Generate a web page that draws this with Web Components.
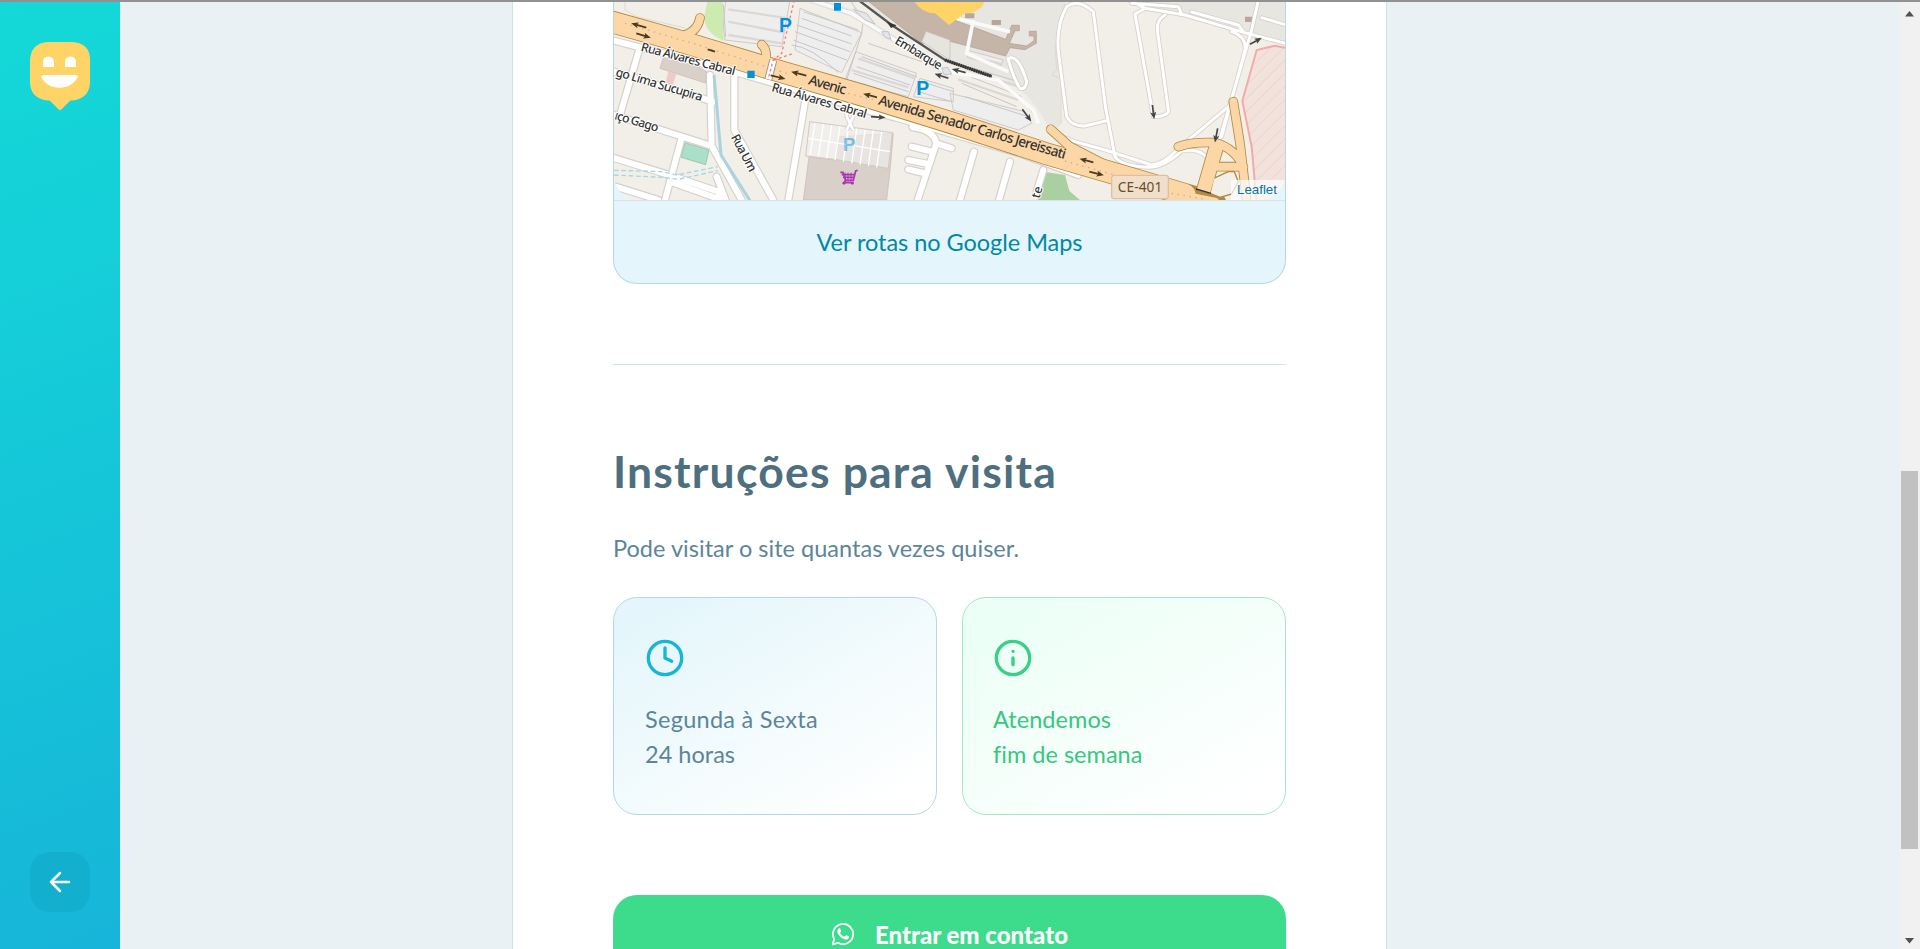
<!DOCTYPE html>
<html lang="pt-BR">
<head>
<meta charset="utf-8">
<title>Instruções para visita</title>
<style>
html,body{margin:0;height:100%;overflow:hidden}
body{font-family:Lato,"Noto Sans",sans-serif;font-size:23.5px;background:#e9f1f5}
</style>
</head>
<body>
<visit-page></visit-page>
<script>
const define=(name,html,setup)=>customElements.define(name,class extends HTMLElement{
  connectedCallback(){
    if(this.shadowRoot)return;
    const t=document.createElement('template');
    t.innerHTML=html;
    this.attachShadow({mode:'open'}).append(t.content.cloneNode(true));
    if(setup)setup(this);
  }
});

/* One line of text tracked to a given advance width. */
define('fit-text',`<style>:host{display:block;white-space:nowrap}span{display:inline-block}</style><span><slot></slot></span>`,el=>{
  const s=el.shadowRoot.querySelector('span');
  const n=el.textContent.length;
  const w=s.getBoundingClientRect().width;
  s.style.letterSpacing=((+el.getAttribute('width')-w)/n).toFixed(3)+'px';
});

define('side-bar',`<style>
:host{display:flex;flex-direction:column;justify-content:space-between;align-items:center;box-sizing:border-box;width:120px;height:100%;padding:40px 0 37px;background:linear-gradient(160deg,#14d9d8 0%,#17b5d9 100%)}
svg{display:block}
.back{display:grid;place-items:center;width:60px;height:60px;border-radius:20px;background:#12afce}
</style>
<svg width="60" height="68" viewBox="0 0 60 68"><path fill="#ffd466" d="M18 0H42Q60 1 60 18V41Q59 57 42 58.5H40.500L31.500 67.300Q30 68.500 28.500 67.300L19.500 58.500H18Q1 57 0 41V18Q1 1 18 0Z"/><path fill="#fff" d="M13 25V20a5.500 5.500 0 0 1 11 0v5zM35 25V20a5.500 5.500 0 0 1 11 0v5zM13.200 33H45.800Q48.500 33 47.500 35.500C44 42 37.500 45.700 29.500 45.700S15 42 11.400 35.500Q10.500 33 13.200 33Z"/></svg>
<div class="back"><svg width="24" height="24" viewBox="0 0 24 24" fill="none" stroke="#fff" stroke-width="2.500" stroke-linecap="round" stroke-linejoin="round"><path d="M21 12H3M12 3L3 12L12 21"/></svg></div>`);

define('scroll-bar',`<style>
:host{display:flex;flex-direction:column;box-sizing:border-box;width:20px;height:100%;padding:9px 2px 5px 1px;background:#f1f1f1}
svg{display:block;margin:0 auto}
.track{flex:1;padding-top:454px}.thumb{height:378px;background:#c1c1c1}
</style>
<svg width="9" height="6"><path d="M0 5.500L4.500 0L9 5.500z" fill="#505050"/></svg><div class="track"><div class="thumb"></div></div><svg width="9" height="6"><path d="M0 0L4.500 5.500L9 0z" fill="#505050"/></svg>`);

define('street-map',`<style>
:host{display:block;height:200px;overflow:hidden;border-radius:0 0 24px 24px;position:relative;background:#f2efe9}
svg{display:block}
text{font-family:"Noto Sans",sans-serif;fill:#333}
.halo{paint-order:stroke;stroke:#fff;stroke-width:6px;stroke-linejoin:round}
.c{fill:none;stroke:#d5d1cc;stroke-linecap:round;stroke-linejoin:round}
.w{fill:none;stroke:#fff;stroke-linecap:round;stroke-linejoin:round}
.oc{fill:none;stroke:#b08a42;stroke-linejoin:round;stroke-linecap:round}
.o{fill:none;stroke:#fcd6a4;stroke-linejoin:round;stroke-linecap:round}
.p{font-family:"Liberation Sans",sans-serif;font-weight:bold;fill:#0092da}
.leaf{position:absolute;right:0;bottom:0;box-sizing:border-box;width:54px;height:20px;padding:0 6px;background:rgba(255,255,255,.7);font:13.300px/19px "Liberation Sans",Arial,sans-serif;color:#0078a8}
</style>
<svg width="671" height="200" viewBox="27 0 2013 600" preserveAspectRatio="none">
<defs>
<pattern id="h" width="28" height="28" patternUnits="userSpaceOnUse" patternTransform="rotate(45)"><rect width="28" height="28" fill="#f1e2dc"/><path d="M0 0V28" stroke="#eec6c2" stroke-width="3"/></pattern>
<marker id="a" markerUnits="userSpaceOnUse" markerWidth="22" markerHeight="20" refX="10" refY="10" orient="auto"><path d="M0 1L22 10L0 19L5 10z" fill="#4a3a20"/></marker>
<marker id="g" markerUnits="userSpaceOnUse" markerWidth="22" markerHeight="20" refX="10" refY="10" orient="auto"><path d="M0 1L22 10L0 19L5 10z" fill="#444"/></marker>
<g id="roads">
<path d="M27 122L390 216L800 335L870 352L960 378L1250 462L1420 525"/>
<path d="M102 150L45 345M27 215L325 305M27 345L320 438L410 600M315 225L320 438M388 225V390L505 600M228 420L180 600M27 474L196 526L340 575L350 600M196 545L350 600M335 530L362 600M27 558L160 600"/>
<path d="M600 305L550 600M922 382Q985 390 994 430L938 600M994 430L1040 445M920 440L985 456M910 480L970 492M910 508L960 520M1107 455L1065 600M1215 485L1182 600M1315 510L1295 575"/>
</g>
<g id="fine">
<path d="M1385 20Q1420 -5 1465 35L1502 325L1530 470Q1550 500 1635 502Q1680 500 1730 453Q1800 440 1820 500M1385 20Q1350 80 1362 170L1385 350Q1400 380 1440 378L1505 362M1345 400L1410 425L1500 450L1640 495Q1680 490 1715 450L1870 320"/>
<path d="M1575 0L1620 25L1740 45L1908 95L2041 130M1620 25L1590 42L1645 350M1680 45Q1655 60 1657 90L1690 330Q1690 350 1645 350M1580 10L1720 20L1730 42M1760 36L1900 75L1915 95M1960 0L1940 90L1835 450M1880 95Q1925 110 1920 150L1850 410M1970 53L2041 74M1209 176Q1240 160 1265 245Q1262 270 1245 265Q1225 235 1209 176Z"/>
</g>
</defs>
<rect width="2060" height="600" fill="#f2efe9"/>
<path fill="#e7e6e0" d="M760 0H1385Q1355 80 1360 170L1370 370L1340 400Q1270 260 1180 230L1050 195Z"/><path fill="#e7e6e0" d="M1540 0H2041V130L1908 95L1620 25Z"/>
<path fill="none" stroke="#e2dac8" stroke-width="3" d="M1380 10L1350 140L1355 210L1340 225L1368 235V370M60 6V30L95 50L240 84M1180 240Q1260 290 1300 370"/>
<path fill="#cdebb0" d="M308 0H354L356 122Q300 100 298 50Z"/>
<path fill="#aacfa0" d="M1320 516L1380 525L1393 573L1425 600H1298Z"/>
<path fill="#aadfcb" stroke="#83ba9c" stroke-width="2" d="M240 428L312 450L302 494L228 472Z"/>
<path fill="#d9d0c9" stroke="#c4b5ab" stroke-width="2" d="M182 150L305 215L301 249L165 205Z"/>
<path fill="#eecbc8" d="M190 213L214 222L202 258L182 250Z"/>
<path fill="#d9d0c9" stroke="#c9b8af" stroke-width="2" d="M700 410L865 400L855 512L845 600H595L612 470L690 480Z"/>
<path fill="#c5b5a9" stroke="#b39c8c" stroke-width="2" d="M785 0H1035V55L1202 118L1220 76H1243V92H1230L1213 130L1265 138L1287 122V108H1273V94H1294V130L1260 149L1215 143L1202 168L1035 124L950 130Z"/>
<path fill="#e6e4df" stroke="#c5bab2" stroke-width="2" d="M963 94L1035 120V180L950 125Z"/>
<path fill="#b9a69b" d="M1080 40H1108V55H1080zM1160 60H1188V75H1160zM1920 50H1942V66H1920z"/>
<g fill="#eee" stroke="#d4c8c5" stroke-width="3">
<path d="M362 0H555L530 140L360 120L355 78ZM585 25L770 98L710 218L570 150ZM752 155L935 220L910 290L720 240ZM945 235L1045 265V305L925 290ZM1035 280L1260 335L1280 370L1240 390L1045 330ZM1085 150L1195 180L1187 198L1088 173Z"/>
<path d="M614 365L862 398L850 505L688 478L602 468Z" fill-opacity=".65"/></g>
<g fill="none" stroke="#ddd7d3" stroke-width="7"><path d="M370 28L550 55M370 65L540 98M370 105L530 130M760 175L930 235M740 210L910 262M1090 170L1190 192M1080 205L1240 260M1060 238L1240 300"/></g>
<g fill="none" stroke="#c6c6c6" stroke-width="3"><path d="M595 35L760 90M590 55L740 108M575 75L740 132M570 95L735 155M565 120L725 180M560 135Q620 140 700 218M790 130L950 185M770 170L935 230M755 200L915 255M745 220L910 275M950 245L1045 275M940 275L1040 305M1090 200L1240 245M1070 220L1250 290M1070 250L1235 320M1080 290L1270 350M735 0L775 60L770 100L725 240M355 15L362 110"/></g>
<g fill="none" stroke="#ddd"><path d="M618 0L740 40L870 120L1035 225" stroke-width="18"/></g>
<g fill="none" stroke="#fafafa" stroke-width="11"><path d="M618 0L740 40L870 120L1035 225M1035 215L1180 240L1285 330L1300 370M1105 60L1085 160L1210 215M1035 50L1215 95"/></g>
<g fill="none" stroke="#fff" stroke-width="4"><path d="M630 370L615 465M655 372L640 470M680 375L665 475M705 378L690 480M730 382L715 485M755 386L740 490M780 390L765 494M805 392L790 498M830 396L815 502M610 415L855 455"/></g>
<g fill="#e5e4e7" stroke="#c3c4cb" stroke-width="3"><path d="M745 28L785 40L810 72L780 60ZM830 95L850 95L858 118L840 112ZM1010 205L1028 202L1040 222L1018 224Z"/></g>
<path fill="url(#h)" stroke="#f6aaa8" stroke-width="6" d="M2050 145L2010 137L1955 150L1912 303L1940 440L1955 610H2060Z"/>
<path fill="none" stroke="#d5d1cc" stroke-width="13" d="M725 320V350L745 390M745 350L725 390"/><path fill="none" stroke="#fff" stroke-width="8" d="M725 320V350L745 390M745 350L725 390"/>
<use href="#roads" class="c" stroke-width="25"/><use href="#fine" class="c" stroke-width="14"/>
<use href="#roads" class="w" stroke-width="18"/><use href="#fine" class="w" stroke-width="9"/>
<path fill="none" stroke="#aad3df" stroke-width="9" d="M327 225L348 465L435 602"/>
<path fill="none" stroke="#a8d5e2" stroke-width="4" stroke-dasharray="14 8" d="M27 511L170 515L215 525L338 500M27 525L170 532L220 538L338 512"/>
<g class="oc"><path stroke-width="68" d="M0 60L230 125L500 207L780 288L1035 367L1320 460L1560 530L1830 610"/><path stroke-width="29" d="M285 54Q275 105 215 110M470 134Q490 150 480 190M1337 388L1395 440L1540 515M1885 305L1905 430L1925 600M1720 440Q1760 425 1830 428Q1890 445 1915 500M1820 500H1910"/><path stroke-width="46" stroke-linecap="butt" d="M1837 430L1795 575"/></g>
<path d="M1870 515H1888L1900 545L1880 582L1845 592L1815 580L1826 535Z" fill="#f2efe9" stroke="#b08a42" stroke-width="4" stroke-linejoin="round"/>
<g class="o"><path stroke-width="63" d="M0 60L230 125L500 207L780 288L1035 367L1320 460L1560 530L1740 583"/><path stroke-width="24" d="M285 54Q275 105 215 110M470 134Q490 150 480 190M1337 388L1395 440L1540 515M1885 305L1905 430L1925 600M1720 440Q1760 425 1830 428Q1890 445 1915 500M1820 500H1910"/><path stroke-width="41" stroke-linecap="butt" d="M1837 430L1795 575"/><path stroke-width="24" d="M1740 587L1830 605"/></g>
<path d="M1773 567L1818 580" stroke="#333" stroke-width="4"/>
<path d="M60 70L280 135L545 220M730 280L810 300M1380 483L1530 525M1700 580L1800 598" fill="none" stroke="#c8a9a5" stroke-width="4" stroke-dasharray="4 14"/>
<path d="M505 180L490 238" stroke="#999" stroke-width="24"/><path d="M505 180L490 238" stroke="#fff" stroke-width="18"/><path d="M568 0L530 160L504 182L490 235M560 162L508 180" fill="none" stroke="#ff7a70" stroke-width="4" stroke-dasharray="8 8"/>
<path d="M760 0L860 75L1020 180L1160 229" fill="none" stroke="#555" stroke-width="7"/><path d="M1020 180L1160 229" fill="none" stroke="#333" stroke-width="10" stroke-dasharray="5 2"/><path d="M845 65L875 76L858 84z" fill="#333"/>
<path fill="#ffd466" d="M925 0H1140Q1130 38 1080 40L1032 75L990 40Q950 40 925 0Z"/>
<g fill="#0092da"><path d="M687 9H708V32H687zM427 212H449V234H427z"/></g>
<text class="p" x="522" y="97" font-size="58">P</text><text class="p" x="934" y="284" font-size="58">P</text><text class="p" x="714" y="453" font-size="56" opacity=".5">P</text>
<g fill="none" stroke="#4a3a20" stroke-width="5" marker-end="url(#a)"><path d="M124 83L90 73"/><path d="M94 100L126 110"/><path d="M604 227L570 218"/><path d="M497 226L530 234"/><path d="M816 292L786 284"/><path d="M1465 487L1435 479"/><path d="M1453 515L1485 523"/></g><path d="M308 148L330 155" stroke="#4a3a20" stroke-width="5"/>
<g fill="none" stroke="#444" stroke-width="5" marker-end="url(#g)"><path d="M798 350L830 352"/><path d="M1030 235L1000 225"/><path d="M1082 218L1052 210"/><path d="M1252 328L1272 355"/><path d="M1642 315L1646 346"/><path d="M1838 385L1832 416"/><path d="M1935 133L1960 119"/></g>
<g class="halo" font-size="37" font-weight="500">
<text transform="translate(106 152) rotate(14.800)" textLength="291">Rua Álvares Cabral</text>
<text transform="translate(498 273) rotate(16)" textLength="295">Rua Álvares Cabral</text>
<text transform="translate(30 227) rotate(16.500)" textLength="270">go Lima Sucupira</text>
<text transform="translate(27 357) rotate(16.500)" textLength="135">ıço Gago</text>
<text transform="translate(377 411) rotate(62)" textLength="122">Rua Um</text>
<text transform="translate(867 129) rotate(31)" textLength="158">Embarque</text>
<text transform="translate(1303 597) rotate(-74)">te</text></g>
<g font-size="42" font-weight="500" style="paint-order:stroke;stroke:#fcd6a4;stroke-width:5px"><text transform="translate(608 252) rotate(16)" textLength="116">Avenic</text><text transform="translate(818 313) rotate(16.300)" textLength="584">Avenida Senador Carlos Jereissati</text></g>
<rect x="1520" y="526" width="170" height="70" rx="7" fill="#f0e0cb" stroke="#dec0a0" stroke-width="4"/><text x="1538" y="575" font-size="41" textLength="134" style="fill:#684d2b">CE-401</text>
<path d="M706 517H714L722 541H745L752 513L758 511M710 524H750M714 532H747M722 541L716 548H746" fill="none" stroke="#ad36b0" stroke-width="5"/><path d="M720 518V541M729 518V541M738 518V541" stroke="#ad36b0" stroke-width="3"/><circle cx="717" cy="550" r="4" fill="#ad36b0"/><circle cx="742" cy="550" r="4" fill="#ad36b0"/>
</svg><div class="leaf">Leaflet</div>`);

define('map-card',`<style>
:host{display:block;box-sizing:border-box;height:284px;border:1px solid #b3dae2;border-top:0;border-radius:0 0 24px 24px;background:#e4f6fb;overflow:hidden}
.line{height:1px;background:#d9e2ea}
.link{display:flex;justify-content:center;line-height:82px;height:82px;color:#0089a5}
</style><street-map></street-map><div class="line"></div><div class="link"><fit-text width="266">Ver rotas no Google Maps</fit-text></div>`);

define('info-card',`<style>
:host{display:block;box-sizing:border-box;height:218px;padding:40px 31px;border:1px solid #b3dae2;border-radius:24px;background:linear-gradient(149.970deg,#e4f6fb 8.800%,#fff 91.200%);color:#5c8599;line-height:35px}
:host([tone=green]){padding-left:30px;border-color:#a1e9c5;background:linear-gradient(149.970deg,#ebfff6 8.800%,#fff 91.200%);color:#37c77f}
.text{margin-top:24px}
</style><slot name="icon"></slot><div class="text"><slot></slot></div>`);

define('contact-button',`<style>
:host{display:flex;justify-content:center;align-items:center;gap:20px;box-sizing:border-box;height:78px;border-radius:24px;background:#3cdc8c;color:#fff;font-weight:900;font-size:24px}
svg{display:block}fit-text{margin-top:-3px}</style>
<svg width="24" height="24" viewBox="0 0 24 24"><path fill="none" stroke="#fff" stroke-width="1.800" stroke-linejoin="round" d="M1.700 22.300L3.200 16.900A10.100 10.100 0 1 1 7 20.800Z"/><path fill="#fff" d="M8.300 6.300c.4 0 .7 0 .9.500l.9 2.100c.1.300 0 .6-.2.800l-.7.900c-.2.200-.2.400 0 .7 1 1.600 2.200 2.600 3.900 3.300.3.100.5.100.7-.1l.9-1.100c.2-.3.500-.3.800-.2l2.100 1c.4.200.5.300.5.500 0 1.800-1.500 2.900-3 2.900-3.700-.2-8.200-4.500-8.700-7.900 0-1.500.8-3.200 1.900-3.400z"/></svg><slot></slot>`);

define('visit-page',`<style>
:host{display:flex;flex-direction:column;height:949px}
.top{height:2px;background:#919191;flex:none;position:relative}
.body{display:flex;flex:1;min-height:0;overflow:hidden}
.body>*{flex:none}
main{box-sizing:border-box;width:875px;margin:0 513px 0 392px;background:#fff;border:solid #cfe2e6;border-width:0 1px;padding:0 100px;height:1020px}
map-card{margin-top:-2px}
hr{margin:80px 0 0;border:0;height:1px;background:#cde5e5}
h2{margin:78px 0 0;font-size:44.500px;line-height:56px;color:#4d6f80;font-weight:700}
p{margin:32px 0 0;line-height:35px;color:#5c8599}
.cards{display:grid;grid-template-columns:1fr 1fr;gap:25px;margin:31px 0 80px}
svg{display:block;fill:none;stroke-width:2;stroke-linecap:round;stroke-linejoin:round}
</style>
<div class="top"></div>
<div class="body"><side-bar></side-bar>
<main><map-card></map-card><hr>
<h2><fit-text width="444">Instruções para visita</fit-text></h2>
<p><fit-text width="406">Pode visitar o site quantas vezes quiser.</fit-text></p>
<div class="cards">
<info-card><svg slot="icon" width="40" height="40" viewBox="0 0 24 24" stroke="#17b6d8"><circle cx="12" cy="12" r="10"/><path d="M12 6V12L16 14"/></svg><fit-text width="173">Segunda à Sexta</fit-text><fit-text width="90">24 horas</fit-text></info-card>
<info-card tone="green"><svg slot="icon" width="40" height="40" viewBox="0 0 24 24" stroke="#3acf86"><circle cx="12" cy="12" r="10"/><path d="M12 16V12M12 8h.01"/></svg><fit-text width="118">Atendemos</fit-text><fit-text width="149">fim de semana</fit-text></info-card>
</div>
<contact-button><fit-text width="193">Entrar em contato</fit-text></contact-button>
</main><scroll-bar></scroll-bar></div>`);
</script>
</body>
</html>
